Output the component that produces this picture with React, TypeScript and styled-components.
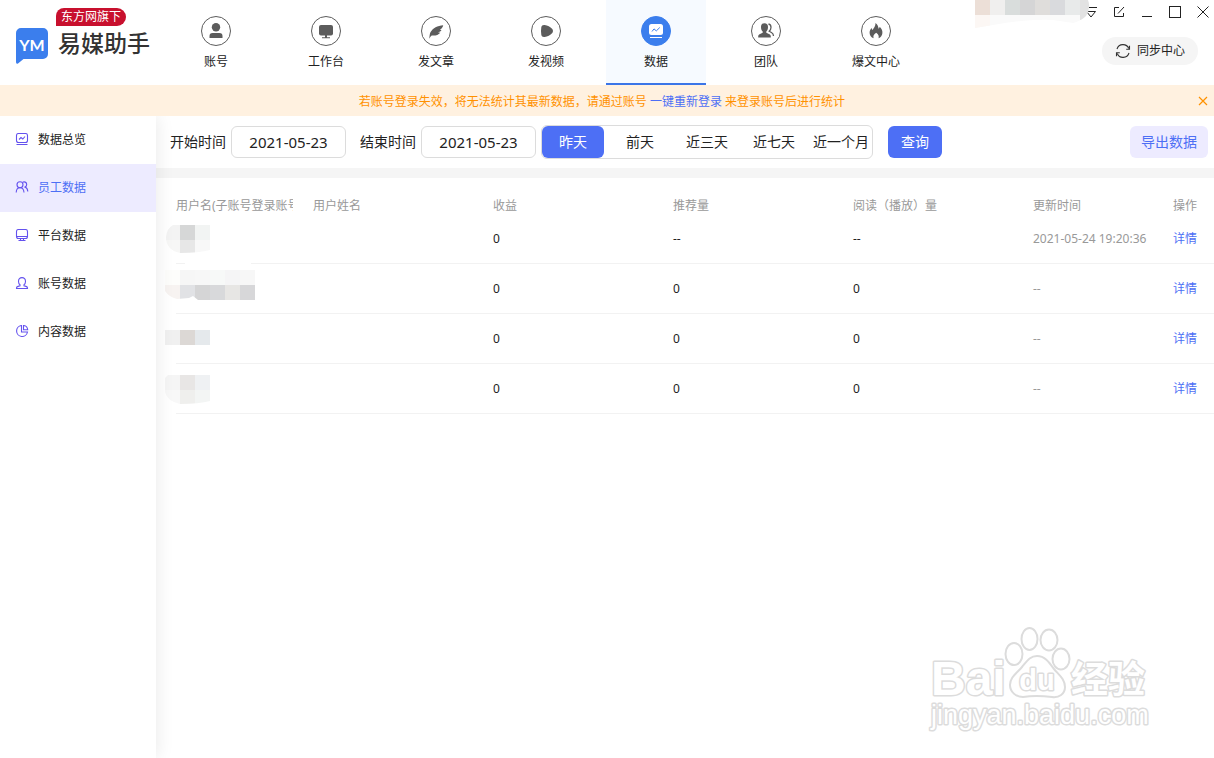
import React from "react";
import styled, { createGlobalStyle } from "styled-components";

const color = {
  text: "#222",
  muted: "#999",
  icon: "#5c5c5c",
  brand: "#3b7eed",
  primary: "#4d6ff5",
  tint: "#edebff",
  line: "#dcdcdc",
  band: "#f5f5f5",
};

const GlobalStyle = createGlobalStyle`
  *, *::before, *::after { box-sizing: border-box; }
  body {
    margin: 0;
    background: #fff;
    color: ${color.text};
    font-family: "Noto Sans", "Noto Sans CJK SC", sans-serif;
    font-size: 12px;
    line-height: 18px;
  }
  button, input { font: inherit; color: inherit; }
  button { border: 0; padding: 0; background: none; cursor: pointer; }
  a { color: ${color.primary}; text-decoration: none; }
`;

const Page = styled.div`
  position: relative;
  display: flex;
  flex-direction: column;
  min-height: 100vh;
`;

/* ---------- header ---------- */

const Header = styled.header`
  position: relative;
  z-index: 2;
  display: flex;
  height: 85px;
  background: #fff;
`;

const Brand = styled.div`
  display: flex;
  width: 166px;
  padding: 8px 0 0 16px;
  gap: 8px;
`;

const BrandMark = styled.svg`
  flex: none;
  margin-top: 20px;
`;

const BrandText = styled.div`
  display: flex;
  flex-direction: column;
  align-items: flex-start;
`;

const BrandTag = styled.span`
  height: 18px;
  padding: 0 5px;
  border-radius: 8px 9px 9px 0;
  background: #c8102e;
  color: #fff;
  font-size: 12px;
  line-height: 18px;
  white-space: nowrap;
`;

const BrandName = styled.strong`
  padding-left: 2px;
  font-size: 23px;
  font-weight: 500;
  line-height: 34px;
  color: #333;
  white-space: nowrap;
`;

const Nav = styled.nav`
  display: flex;
  gap: 10px;
`;

const NavItem = styled.a<{ $active?: boolean }>`
  display: flex;
  flex-direction: column;
  align-items: center;
  gap: 7px;
  width: 100px;
  padding-top: 16px;
  color: ${color.text};
  background: ${(p) => (p.$active ? "#f6faff" : "transparent")};
  border-bottom: 2px solid ${(p) => (p.$active ? "#3b75e8" : "transparent")};
`;

const NavIcon = styled.span<{ $active?: boolean }>`
  display: grid;
  place-items: center;
  width: 30px;
  height: 30px;
  border: 1px solid ${(p) => (p.$active ? color.brand : color.icon)};
  border-radius: 50%;
  background: ${(p) => (p.$active ? color.brand : "#fff")};
  color: ${color.icon};
`;

const HeaderSide = styled.div`
  position: relative;
  display: flex;
  flex-direction: column;
  align-items: flex-end;
  margin-left: auto;
`;

const WindowControls = styled.div`
  display: flex;
  align-items: center;
  gap: 14px;
  height: 24px;
  padding-right: 4px;
`;

const WindowButton = styled.button`
  display: grid;
  place-items: center;
  width: 14px;
  height: 14px;
`;

const AccountMask = styled.svg`
  position: absolute;
  top: 0;
  right: 124px;
`;

const SyncButton = styled.button`
  display: flex;
  align-items: center;
  justify-content: center;
  gap: 6px;
  width: 96px;
  height: 28px;
  margin: 13px 16px 0 0;
  border-radius: 14px;
  background: ${color.band};
`;

/* ---------- notice ---------- */

const Notice = styled.div`
  position: relative;
  z-index: 2;
  display: flex;
  align-items: center;
  height: 31px;
  padding-left: 12px;
  background: #fff1e0;
  color: #ff9100;
`;

const NoticeText = styled.p`
  flex: 1;
  margin: 0;
  padding-top: 2px;
  text-align: center;
`;

const NoticeClose = styled.button`
  display: grid;
  place-items: center;
  width: 22px;
  height: 22px;
`;

/* ---------- body ---------- */

const Body = styled.div`
  display: flex;
  flex: 1;
`;

const Sidebar = styled.aside`
  position: relative;
  z-index: 1;
  flex: none;
  width: 156px;
  background: #fff;
  box-shadow: 2px 0 16px rgba(0, 0, 0, 0.08);
`;

const SideItem = styled.a<{ $active?: boolean }>`
  display: flex;
  align-items: center;
  gap: 9px;
  height: 48px;
  padding-left: 15px;
  color: ${(p) => (p.$active ? color.primary : color.text)};
  background: ${(p) => (p.$active ? color.tint : "transparent")};
`;

const SideIcon = styled.svg`
  fill: none;
  stroke: #6452ee;
  stroke-width: 1.1;
`;

const Main = styled.main`
  flex: 1;
  min-width: 0;
`;

const Toolbar = styled.form`
  display: flex;
  align-items: center;
  height: 52px;
  padding: 0 6px 0 14px;
  font-size: 14px;
`;

const Field = styled.div`
  display: flex;
  align-items: center;
  gap: 5px;
  margin-right: 14px;

  & + & {
    margin-right: 5px;
  }
`;

const DateInput = styled.input`
  width: 115px;
  height: 32px;
  padding: 0;
  border: 1px solid ${color.line};
  border-radius: 6px;
  background: #fff;
  font-size: 15px;
  text-align: center;
  outline: none;
`;

const RangeGroup = styled.div`
  display: flex;
  gap: 5px;
  margin-right: 15px;
  border: 1px solid ${color.line};
  border-radius: 6px;
`;

const RangeButton = styled.button<{ $active?: boolean }>`
  width: 62px;
  height: 32px;
  border-radius: 6px;
  white-space: nowrap;
  color: ${(p) => (p.$active ? "#fff" : color.text)};
  background: ${(p) => (p.$active ? color.primary : "transparent")};
`;

const ActionButton = styled.button<{ $soft?: boolean }>`
  height: 32px;
  padding: 0 ${(p) => (p.$soft ? "11px" : "13px")};
  margin-left: ${(p) => (p.$soft ? "auto" : "0")};
  border-radius: 6px;
  color: ${(p) => (p.$soft ? color.primary : "#fff")};
  background: ${(p) => (p.$soft ? color.tint : color.primary)};
`;

const TableArea = styled.section`
  padding-left: 20px;
  border-top: 10px solid ${color.band};
`;

const Table = styled.table`
  width: 100%;
  table-layout: fixed;
  border-collapse: separate;
  border-spacing: 0;
`;

const HeadCell = styled.th`
  height: 36px;
  padding: 20px 20px 0 0;
  color: ${color.muted};
  font-weight: 400;
  line-height: 16px;
  text-align: left;
  white-space: nowrap;

  &:last-child {
    padding-right: 0;
  }
`;

const HeadText = styled.span`
  display: block;
  overflow: hidden;
`;

const Cell = styled.td<{ $muted?: boolean }>`
  height: 50px;
  padding: 0;
  border-bottom: 1px solid #f2f2f2;
  color: ${(p) => (p.$muted ? color.muted : color.text)};
  white-space: nowrap;
`;

const NameMask = styled.svg`
  display: block;
  margin-left: -11px;
  overflow: visible;
`;

const Watermark = styled.svg`
  position: absolute;
  right: 58px;
  bottom: 24px;
  pointer-events: none;
  fill: #fff;
  stroke: #dcdcdc;
  stroke-width: 2;
  stroke-linejoin: round;

  text {
    paint-order: stroke;
    font-family: "Liberation Sans", "Noto Sans CJK SC", sans-serif;
    font-weight: 700;
    stroke-width: 3;
  }

  text:last-child {
    font-weight: 400;
  }
`;

/* ---------- data ---------- */

const navItems = [
  {
    label: "账号",
    icon: (
      <svg width="16" height="18" viewBox="0 0 16 18" fill="currentColor">
        <circle cx="8" cy="5.2" r="4.2" />
        <path d="M1.500 16v-2a3 3 0 0 1 3-3h7a3 3 0 0 1 3 3v2z" />
      </svg>
    ),
  },
  {
    label: "工作台",
    icon: (
      <svg width="16" height="16" viewBox="0 0 16 16" fill="currentColor">
        <rect x="1" y="2" width="14" height="10.4" rx="2" />
        <path d="M7 12h2v2.2h3v1H4v-1h3z" />
      </svg>
    ),
  },
  {
    label: "发文章",
    icon: (
      <svg width="16" height="16" viewBox="0 0 16 16" fill="currentColor">
        <path d="M15.200 2.200C9.500 2.600 5 5 2.600 9c-.9 1.700-1.100 3.800-1.300 6.700.7-1.500 1.500-2.600 2.400-3.300 3.300.6 6.300-.3 8.600-2.700l-2.400-.4c1.700-.2 2.900-.9 3.600-2l-1.600-.5C13.700 5.600 14.800 4.200 15.200 2.200z" />
      </svg>
    ),
  },
  {
    label: "发视频",
    icon: (
      <svg width="16" height="16" viewBox="0 0 16 16" fill="currentColor">
        <path d="M3.300 4.200C3.600 2.500 5 1.700 6.600 2c3 .5 5.600 1.800 7.700 4.100.9 1.100.9 2.700 0 3.800-2.100 2.300-4.700 3.600-7.700 4.100-1.600.3-3-.5-3.300-2.200-.4-2.500-.4-5.100 0-7.600z" />
      </svg>
    ),
  },
  {
    label: "数据",
    active: true,
    icon: (
      <svg width="16" height="16" viewBox="0 0 16 16" fill="#fff">
        <rect x="1" y="1" width="14" height="11" rx="2.500" />
        <path d="M2 14.500h12" stroke="#fff" strokeWidth="1" />
        <path d="M4 8.500l2-2.600 2.300 2 3.500-3.400" stroke={color.brand} fill="none" />
      </svg>
    ),
  },
  {
    label: "团队",
    icon: (
      <svg width="18" height="18" viewBox="0 0 18 18" fill="currentColor">
        <path d="M4 5C4 2.500 5.300 1.300 7.500 1.300S11 2.500 11 5c0 2-.6 3.500-1.700 4.500v1.200l3.200 1.500c.9.500 1.300 1.200 1.300 2.300v1H1.200v-1c0-1.100.4-1.800 1.300-2.300l3.200-1.500V9.500C4.600 8.500 4 7 4 5z" />
        <path d="M11.500 2c1.800.4 2.500 1.600 2.500 3.200 0 1.700-.7 3-1.800 4l2.600 1.600c1.200.7 1.600 1.500 1.700 3.200" fill="none" stroke="currentColor" strokeWidth="1.300" />
      </svg>
    ),
  },
  {
    label: "爆文中心",
    icon: (
      <svg width="16" height="18" viewBox="0 0 16 18" fill="currentColor">
        <path d="M7.500 1c2.200 1.500 3 3.600 3 5.800.8-.5 1.100-1.200 1.200-2 2 2 2.900 4 2.700 6.200-.2 2.600-1.600 4.300-3.800 5.300.5-2.200-.1-3.900-2.400-5.600-2.600 1.700-3.200 3.400-2.600 5.600C3.200 15.300 1.700 13.500 1.600 11c-.1-1.900.7-3.600 2.100-5 .1 1 .4 1.600.9 2C5.600 6 7.800 4 7.500 1z" />
      </svg>
    ),
  },
];

const sideItems = [
  {
    label: "数据总览",
    icon: (
      <>
        <rect x="1.500" y="1.500" width="11" height="9" rx="2" />
        <path d="M1.500 12.500h11M4 7.500l2-2 1.800 1.500L10 4.500" />
      </>
    ),
  },
  {
    label: "员工数据",
    active: true,
    icon: (
      <>
        <circle cx="5" cy="4.800" r="3" />
        <path d="M1.200 12.500C1.300 9.500 2.800 7.800 5 7.800s3.800 1.700 4 4.700M7.500 2.400c1.600-1.200 4.200-.2 4.200 2 0 1.300-.7 2.200-1.700 2.700 1.800.7 2.700 2.200 2.800 4.400" />
      </>
    ),
  },
  {
    label: "平台数据",
    icon: (
      <>
        <rect x="1.500" y="1.500" width="11" height="9" rx="2" />
        <path d="M1.500 8.500h11M5.500 10.500v2M8.500 10.500v2M3.500 12.500h7" />
      </>
    ),
  },
  {
    label: "账号数据",
    icon: (
      <path d="M1.500 12.500h11v-.6c0-1-.7-1.300-1.500-1.500l-2-.5v-1.200c1-.8 1.500-1.900 1.500-3.300 0-2.300-1.300-3.800-3.500-3.800S3.500 3.100 3.500 5.400c0 1.400.5 2.500 1.500 3.300v1.200l-2 .5c-.8.200-1.500.5-1.500 1.500z" />
    ),
  },
  {
    label: "内容数据",
    icon: (
      <>
        <path d="M6.500 1.500A5.500 5.500 0 1 0 12.500 8H6.500z" />
        <path d="M8.500 1.500v4.300h4.200c-.2-2.300-1.900-4.100-4.200-4.300z" />
      </>
    ),
  },
];

const ranges = ["昨天", "前天", "近三天", "近七天", "近一个月"];

const columns = [
  "用户名(子账号登录账号)",
  "用户姓名",
  "收益",
  "推荐量",
  "阅读（播放）量",
  "更新时间",
  "操作",
];

type Tile = [x: number, y: number, fill: string];

interface Row {
  income: string;
  recommend: string;
  reads: string;
  updated: string;
  outline: string;
  tiles: Tile[];
  coversLine?: boolean;
}

const rows: Row[] = [
  {
    income: "0",
    recommend: "--",
    reads: "--",
    updated: "2021-05-24 19:20:36",
    outline: "M8 11H45V36Q34 39 15 39Q1 36 1 23Q2 14 8 11z",
    tiles: [
      [0, 11, "#f3f3f3"], [15, 11, "#d6d7d7"], [30, 11, "#f2f4f3"],
      [0, 26, "#f7f7f6"], [15, 26, "#e7e7e7"], [30, 26, "#f8f8f8"],
    ],
    coversLine: true,
  },
  {
    income: "0",
    recommend: "0",
    reads: "0",
    updated: "--",
    outline: "M0 6H90V36H33L28 32L24 34L12 35Q4 33 0 27z",
    tiles: [
      [0, 6, "#fdfdfb"], [15, 6, "#f6f6f6"], [30, 6, "#f7f7f7"], [45, 6, "#f7f9f8"], [60, 6, "#f5f5f6"], [75, 6, "#f7f7f7"],
      [0, 21, "#f7f3f1"], [15, 21, "#e1e2e5"], [30, 21, "#d5d5d6"], [45, 21, "#d8d9db"], [60, 21, "#e7e6e4"], [75, 21, "#d7d7d9"],
    ],
  },
  {
    income: "0",
    recommend: "0",
    reads: "0",
    updated: "--",
    outline: "M0 16H45V31H0z",
    tiles: [[0, 16, "#f0f0f0"], [15, 16, "#dcd8d5"], [30, 16, "#e5e9ec"]],
  },
  {
    income: "0",
    recommend: "0",
    reads: "0",
    updated: "--",
    outline: "M3 11H45V37Q34 40 15 40Q2 37 0 28V14z",
    tiles: [
      [0, 11, "#f5f5f5"], [15, 11, "#e8e6e5"], [30, 11, "#eff1f3"],
      [0, 26, "#f8f8f8"], [15, 26, "#efefed"], [30, 26, "#f3f5f4"],
    ],
  },
];

const accountTiles = ["#ecdfd7", "#f0efee", "#d9dddc", "#d5d5d6", "#dfdddb", "#d9dadd", "#e8eaea", "#e2e2e2"];

/* ---------- parts ---------- */

function MaskedName({ row, id }: { row: Row; id: string }) {
  return (
    <NameMask width="90" height="49" viewBox="0 0 90 49" aria-hidden="true">
      <clipPath id={id}>
        <path d={row.outline} />
      </clipPath>
      <g clipPath={`url(#${id})`} shapeRendering="crispEdges">
        {row.tiles.map(([x, y, fill]) => (
          <rect key={`${x}-${y}`} x={x} y={y} width="15" height="15" fill={fill} />
        ))}
      </g>
      {row.coversLine && <rect x="20" y="49" width="66" height="1" fill="#fff" />}
    </NameMask>
  );
}

function TopBar() {
  return (
    <Header>
      <Brand>
        <BrandMark width="32" height="36" viewBox="0 0 32 36" role="img" aria-label="易媒助手">
          <path d="M5 0h22a5 5 0 0 1 5 5v21a5 5 0 0 1-5 5H7.500L2 35.500Q0 36.500 0 34V5a5 5 0 0 1 5-5z" fill={color.brand} />
          <text x="16" y="23" textAnchor="middle" fill="#fff" fontFamily="Lato, sans-serif" fontSize="16" fontWeight="700">
            YM
          </text>
        </BrandMark>
        <BrandText>
          <BrandTag>东方网旗下</BrandTag>
          <BrandName>易媒助手</BrandName>
        </BrandText>
      </Brand>
      <Nav>
        {navItems.map((item) => (
          <NavItem key={item.label} href="#" $active={item.active}>
            <NavIcon $active={item.active}>{item.icon}</NavIcon>
            {item.label}
          </NavItem>
        ))}
      </Nav>
      <HeaderSide>
        <WindowControls>
          <WindowButton type="button" aria-label="菜单">
            <svg width="14" height="14" viewBox="0 0 14 14" fill="none" stroke="#222">
              <path d="M1 2.500h12M2.500 6.500h9L7 12z" />
            </svg>
          </WindowButton>
          <WindowButton type="button" aria-label="反馈">
            <svg width="14" height="14" viewBox="0 0 14 14" fill="none" stroke="#222">
              <path d="M7 2.500H2.500v9h9V8M6 8.500L12 2" />
            </svg>
          </WindowButton>
          <WindowButton type="button" aria-label="最小化">
            <svg width="14" height="14" viewBox="0 0 14 14" fill="none" stroke="#222">
              <path d="M2 11.500h10" />
            </svg>
          </WindowButton>
          <WindowButton type="button" aria-label="最大化">
            <svg width="14" height="14" viewBox="0 0 14 14" fill="none" stroke="#222">
              <rect x="1.500" y="1.500" width="11" height="11" />
            </svg>
          </WindowButton>
          <WindowButton type="button" aria-label="关闭">
            <svg width="14" height="14" viewBox="0 0 14 14" fill="none" stroke="#222">
              <path d="M1.500 1.500l11 11M12.500 1.500l-11 11" />
            </svg>
          </WindowButton>
        </WindowControls>
        <AccountMask width="115" height="28" viewBox="0 0 115 28" aria-hidden="true">
          <clipPath id="account">
            <path d="M0 0H113Q116 8 111 16Q106 21 98 23L78 20Q50 19 24 24L0 28z" />
          </clipPath>
          <g clipPath="url(#account)" shapeRendering="crispEdges">
            <rect width="115" height="28" fill="#fafafa" />
            <rect y="15" width="15" height="13" fill="#fcf7f4" />
            {accountTiles.map((fill, i) => (
              <rect key={fill} x={i * 15} width="15" height={i === 7 ? 20 : 15} fill={fill} />
            ))}
          </g>
        </AccountMask>
        <SyncButton type="button">
          <svg width="16" height="16" viewBox="0 0 16 16" fill="none" stroke="#333" strokeWidth="1.100">
            <path d="M2 6a6.300 6.300 0 0 1 11.800-.5M14 10a6.300 6.300 0 0 1-11.800.5" />
            <path d="M14.500 2.800v3.400h-3.300M1.500 13.200V9.800h3.300" />
          </svg>
          同步中心
        </SyncButton>
      </HeaderSide>
    </Header>
  );
}

function BaiduWatermark() {
  return (
    <Watermark width="230" height="110" viewBox="0 0 230 110" aria-hidden="true">
      <text x="5" y="71" fontSize="48">Bai</text>
      <ellipse cx="88" cy="30" rx="8.500" ry="11" />
      <ellipse cx="103.500" cy="15" rx="8" ry="11" />
      <ellipse cx="123" cy="16" rx="8.500" ry="10.500" />
      <ellipse cx="135" cy="35" rx="8.500" ry="10.500" />
      <path d="M111 32c8 0 12 6 17 13 5 6 11 10 11 18 0 7-6 11-13 10-9-1-22-1-29 0-7 0-13-5-13-12 0-8 7-12 12-18 5-6 8-11 15-11z" />
      <text x="111" y="66" fontSize="29" textAnchor="middle">du</text>
      <text x="145" y="69" fontSize="37">经验</text>
      <text x="5" y="100" fontSize="27">jingyan.baidu.com</text>
    </Watermark>
  );
}

export default function App() {
  return (
    <Page>
      <GlobalStyle />
      <TopBar />
      <Notice>
        <NoticeText>
          若账号登录失效，将无法统计其最新数据，请通过账号 <a href="#">一键重新登录</a> 来登录账号后进行统计
        </NoticeText>
        <NoticeClose type="button" aria-label="关闭提示">
          <svg width="10" height="10" viewBox="0 0 10 10" stroke="#ff9100" strokeWidth="1.200">
            <path d="M1 1l8 8M9 1L1 9" />
          </svg>
        </NoticeClose>
      </Notice>
      <Body>
        <Sidebar>
          {sideItems.map((item) => (
            <SideItem key={item.label} href="#" $active={item.active}>
              <SideIcon width="14" height="14" viewBox="0 1 14 14">
                {item.icon}
              </SideIcon>
              {item.label}
            </SideItem>
          ))}
        </Sidebar>
        <Main>
          <Toolbar onSubmit={(e) => e.preventDefault()}>
            <Field>
              <label htmlFor="start">开始时间</label>
              <DateInput id="start" defaultValue="2021-05-23" />
            </Field>
            <Field>
              <label htmlFor="end">结束时间</label>
              <DateInput id="end" defaultValue="2021-05-23" />
            </Field>
            <RangeGroup>
              {ranges.map((label, i) => (
                <RangeButton key={label} type="button" $active={i === 0}>
                  {label}
                </RangeButton>
              ))}
            </RangeGroup>
            <ActionButton type="submit">查询</ActionButton>
            <ActionButton type="button" $soft>
              导出数据
            </ActionButton>
          </Toolbar>
          <TableArea>
            <Table>
              <colgroup>
                <col width="137" />
                <col span={4} />
                <col width="140" />
                <col width="41" />
              </colgroup>
              <thead>
                <tr>
                  {columns.map((label) => (
                    <HeadCell key={label} scope="col">
                      <HeadText>{label}</HeadText>
                    </HeadCell>
                  ))}
                </tr>
              </thead>
              <tbody>
                {rows.map((row, i) => (
                  <tr key={i}>
                    <Cell>
                      <MaskedName row={row} id={`name-${i}`} />
                    </Cell>
                    <Cell />
                    <Cell>{row.income}</Cell>
                    <Cell>{row.recommend}</Cell>
                    <Cell>{row.reads}</Cell>
                    <Cell $muted>{row.updated}</Cell>
                    <Cell>
                      <a href="#">详情</a>
                    </Cell>
                  </tr>
                ))}
              </tbody>
            </Table>
          </TableArea>
        </Main>
      </Body>
      <BaiduWatermark />
    </Page>
  );
}
